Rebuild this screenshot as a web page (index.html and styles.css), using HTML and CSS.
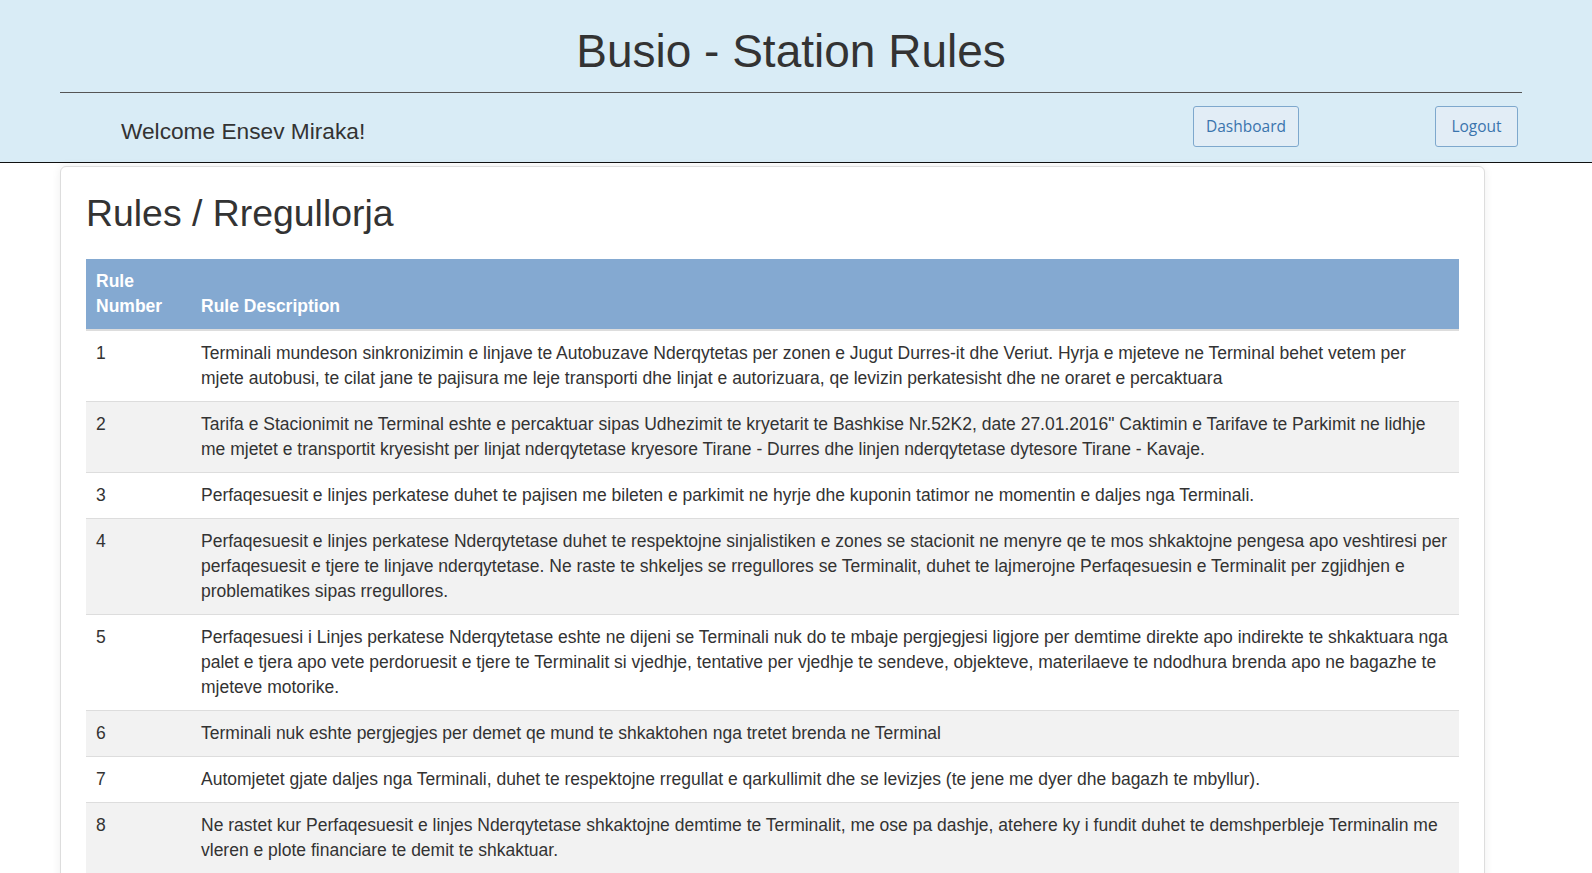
FILE: index.html
```html
<!DOCTYPE html>
<html lang="sq">
<head>
<meta charset="utf-8">
<title>Busio - Station Rules</title>
<link rel="stylesheet" href="styles.css">
</head>
<body>
<header class="site-header">
  <div class="header-inner">
    <h1 class="site-title">Busio - Station Rules</h1>
    <hr class="header-rule">
    <div class="header-bar">
      <div class="welcome">Welcome Ensev Miraka!</div>
      <a class="btn btn-dashboard" href="#">Dashboard</a>
      <a class="btn btn-logout" href="#">Logout</a>
    </div>
  </div>
</header>
<main class="card">
  <h2 class="page-title">Rules / Rregullorja</h2>
  <table class="rules-table">
    <thead>
      <tr>
        <th class="col-num">Rule Number</th>
        <th>Rule Description</th>
      </tr>
    </thead>
    <tbody>
      <tr><td>1</td><td>Terminali mundeson sinkronizimin e linjave te Autobuzave Nderqytetas per zonen e Jugut Durres-it dhe Veriut. Hyrja e mjeteve ne Terminal behet vetem per mjete autobusi, te cilat jane te pajisura me leje transporti dhe linjat e autorizuara, qe levizin perkatesisht dhe ne oraret e percaktuara</td></tr>
      <tr><td>2</td><td>Tarifa e Stacionimit ne Terminal eshte e percaktuar sipas Udhezimit te kryetarit te Bashkise Nr.52K2, date 27.01.2016" Caktimin e Tarifave te Parkimit ne lidhje me mjetet e transportit kryesisht per linjat nderqytetase kryesore Tirane - Durres dhe linjen nderqytetase dytesore Tirane - Kavaje.</td></tr>
      <tr><td>3</td><td>Perfaqesuesit e linjes perkatese duhet te pajisen me bileten e parkimit ne hyrje dhe kuponin tatimor ne momentin e daljes nga Terminali.</td></tr>
      <tr><td>4</td><td>Perfaqesuesit e linjes perkatese Nderqytetase duhet te respektojne sinjalistiken e zones se stacionit ne menyre qe te mos shkaktojne pengesa apo veshtiresi per perfaqesuesit e tjere te linjave nderqytetase. Ne raste te shkeljes se rregullores se Terminalit, duhet te lajmerojne Perfaqesuesin e Terminalit per zgjidhjen e problematikes sipas rregullores.</td></tr>
      <tr><td>5</td><td>Perfaqesuesi i Linjes perkatese Nderqytetase eshte ne dijeni se Terminali nuk do te mbaje pergjegjesi ligjore per demtime direkte apo indirekte te shkaktuara nga palet e tjera apo vete perdoruesit e tjere te Terminalit si vjedhje, tentative per vjedhje te sendeve, objekteve, materilaeve te ndodhura brenda apo ne bagazhe te mjeteve motorike.</td></tr>
      <tr><td>6</td><td>Terminali nuk eshte pergjegjes per demet qe mund te shkaktohen nga tretet brenda ne Terminal</td></tr>
      <tr><td>7</td><td>Automjetet gjate daljes nga Terminali, duhet te respektojne rregullat e qarkullimit dhe se levizjes (te jene me dyer dhe bagazh te mbyllur).</td></tr>
      <tr><td>8</td><td>Ne rastet kur Perfaqesuesit e linjes Nderqytetase shkaktojne demtime te Terminalit, me ose pa dashje, atehere ky i fundit duhet te demshperbleje Terminalin me vleren e plote financiare te demit te shkaktuar.</td></tr>
    </tbody>
  </table>
</main>
</body>
</html>
```
FILE: styles.css
```css
* { box-sizing: border-box; }

body {
  margin: 0;
  background: #fff;
  color: #333;
  font-family: "Liberation Sans", Arial, sans-serif;
  font-size: 17.5px;
}

.site-header {
  background: #d9ecf6;
  border-bottom: 1px solid #111;
  height: 163px;
}

.header-inner {
  margin: 0 70px 0 60px;
  padding-top: 25px;
}

.site-title {
  margin: 0;
  text-align: center;
  font-family: "Comic Sans MS", "Liberation Sans", sans-serif;
  font-weight: normal;
  font-size: 46px;
  line-height: 53px;
  color: #333;
}

.header-rule {
  margin: 14px 0 0;
  border: 0;
  border-top: 1px solid #555;
  height: 0;
}

.header-bar {
  display: flex;
  align-items: flex-end;
  margin-top: 13px;
}

.welcome {
  flex: 1;
  padding-left: 61px;
  padding-bottom: 3px;
  font-family: "Comic Sans MS", "Liberation Sans", sans-serif;
  font-size: 22.7px;
  line-height: 25px;
  color: #333;
}

.btn {
  display: inline-block;
  min-width: 83px;
  padding: 9px 12px;
  border: 1px solid #7ea8cd;
  border-radius: 3px;
  background: #e2edf6;
  color: #3a74ad;
  font-family: "Open Sans", sans-serif;
  font-size: 15.5px;
  line-height: 21px;
  text-align: center;
  text-decoration: none;
}

.btn-logout {
  margin-left: 136px;
  margin-right: 4px;
}

.card {
  display: block;
  width: 1425px;
  margin: 3px 0 0 60px;
  padding: 25px 25px 20px;
  border: 1px solid #ddd;
  border-radius: 6px;
  background: #fff;
  box-shadow: 0 0 10px rgba(0, 0, 0, 0.07);
}

.page-title {
  margin: 0 0 24px;
  font-size: 37.4px;
  font-weight: normal;
  line-height: 42.5px;
  color: #333;
}

.rules-table {
  width: 100%;
  border-collapse: collapse;
  table-layout: fixed;
  font-size: 17.5px;
}

.rules-table th {
  background: #84a9d1;
  color: #fff;
  font-weight: bold;
  text-align: left;
  vertical-align: bottom;
  padding: 10px;
  line-height: 25px;
  border-bottom: 2px solid #ddd;
}

.rules-table .col-num {
  width: 105px;
}

.rules-table td {
  padding: 10px;
  line-height: 25px;
  vertical-align: top;
  border-top: 1px solid #ddd;
  color: #333;
}

.rules-table tbody tr:nth-child(even) {
  background: #f2f2f2;
}
```
